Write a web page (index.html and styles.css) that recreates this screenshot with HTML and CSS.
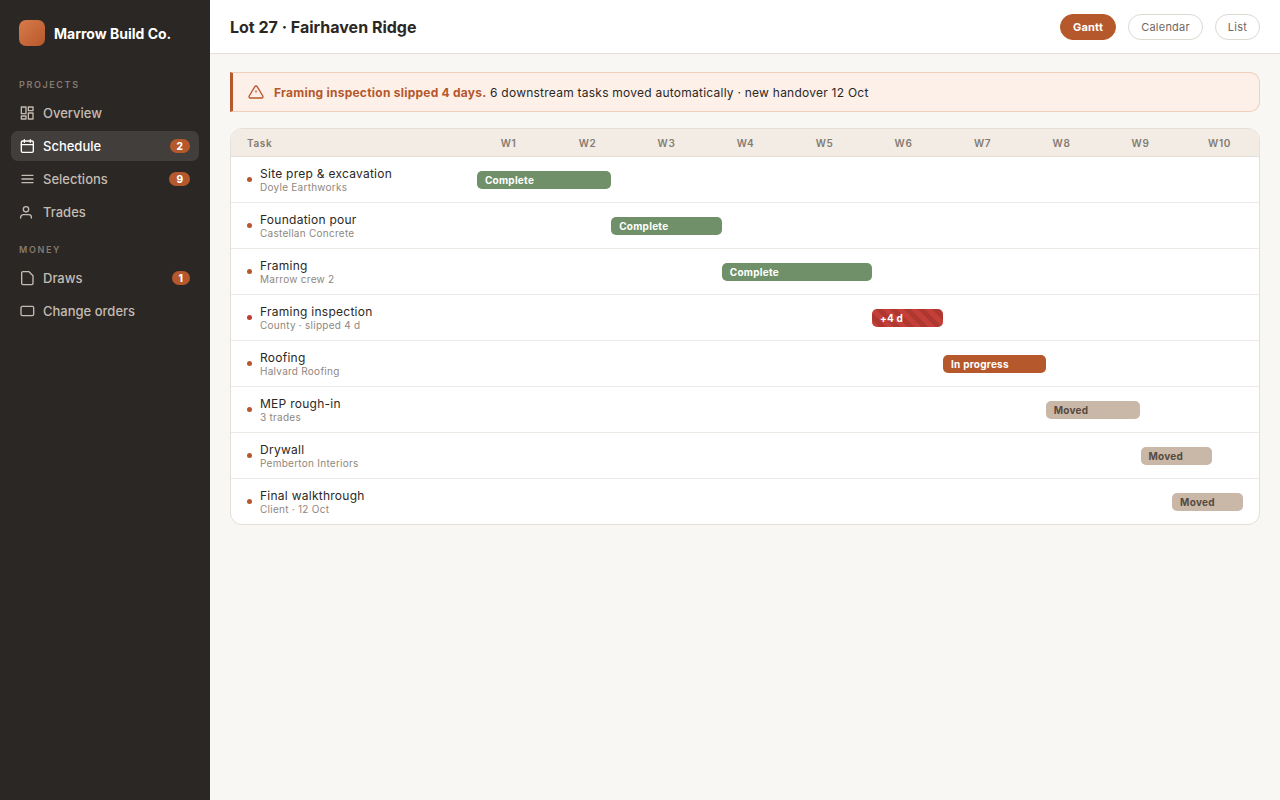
FILE: index.html
```
<!DOCTYPE html>
<html lang="en">
<head>
    <meta charset="UTF-8">
    <meta name="viewport" content="width=device-width, initial-scale=1.0">
    <title>Lot 27 · Fairhaven Ridge</title>
    <link rel="stylesheet" href="styles.css">
</head>
<body>

<aside class="sidebar">
    <div class="brand">
        <span class="brand-mark"></span>
        <span class="brand-name">Marrow Build Co.</span>
    </div>

    <nav class="nav">
        <h2 class="nav-label">Projects</h2>
        <a class="nav-item" href="#">
            <svg class="icon" viewBox="0 0 24 24"><rect x="3.5" y="3" width="7" height="10"/><rect x="14" y="3" width="7" height="5.5"/><rect x="14" y="12" width="7" height="9"/><rect x="3.5" y="16.5" width="7" height="4.5"/></svg>
            Overview
        </a>
        <a class="nav-item active" href="#">
            <svg class="icon" viewBox="0 0 24 24"><rect x="3.5" y="4.5" width="18" height="17" rx="2"/><path d="M3.5 10h18M8 2.5v4M17 2.5v4"/></svg>
            Schedule
            <span class="badge">2</span>
        </a>
        <a class="nav-item" href="#">
            <svg class="icon" viewBox="0 0 24 24"><path d="M4.5 6.5h16.5M4.5 12h16.5M4.5 17.5h16.5"/></svg>
            Selections
            <span class="badge">9</span>
        </a>
        <a class="nav-item" href="#">
            <svg class="icon" viewBox="0 0 24 24"><circle cx="10.5" cy="8" r="4"/><path d="M2.5 21v-1a4 4 0 0 1 4-4h8a4 4 0 0 1 4 4v1"/></svg>
            Trades
        </a>

        <h2 class="nav-label">Money</h2>
        <a class="nav-item" href="#">
            <svg class="icon" viewBox="0 0 24 24"><path d="M15 2.500H6a2 2 0 0 0-2 2v15.500a2 2 0 0 0 2 2h13a2 2 0 0 0 2-2V8.500z"/></svg>
            Draws
            <span class="badge">1</span>
        </a>
        <a class="nav-item" href="#">
            <svg class="icon" viewBox="0 0 24 24"><rect x="3" y="5" width="19" height="14" rx="2"/></svg>
            Change orders
        </a>
    </nav>
</aside>

<div class="main">
    <header class="topbar">
        <h1 class="title">Lot 27 · Fairhaven Ridge</h1>
        <div class="views">
            <button type="button" class="view active">Gantt</button>
            <button type="button" class="view">Calendar</button>
            <button type="button" class="view">List</button>
        </div>
    </header>

    <main class="content">
        <div class="alert">
            <svg class="icon" viewBox="0 0 24 24"><path d="M10.3 3.9 1.8 18a2 2 0 0 0 1.7 3h17a2 2 0 0 0 1.7-3L13.7 3.9a2 2 0 0 0-3.4 0z"/><path d="M12 10.5v1.5"/></svg>
            <p><strong>Framing inspection slipped 4 days.</strong> 6 downstream tasks moved automatically · new handover 12 Oct</p>
        </div>

        <div class="card">
            <table class="gantt">
                <thead>
                    <tr>
                        <th class="task-col">Task</th>
                        <th>W1</th>
                        <th>W2</th>
                        <th>W3</th>
                        <th>W4</th>
                        <th>W5</th>
                        <th>W6</th>
                        <th>W7</th>
                        <th>W8</th>
                        <th>W9</th>
                        <th>W10</th>
                    </tr>
                </thead>
                <tbody>
                    <tr>
                        <td><div class="task"><span class="dot"></span><div><div class="task-name">Site prep &amp; excavation</div><div class="task-sub">Doyle Earthworks</div></div></div></td>
                        <td colspan="10"><div class="bar done" style="margin-left: 1%; width: 17%">Complete</div></td>
                    </tr>
                    <tr>
                        <td><div class="task"><span class="dot"></span><div><div class="task-name">Foundation pour</div><div class="task-sub">Castellan Concrete</div></div></div></td>
                        <td colspan="10"><div class="bar done" style="margin-left: 18%; width: 14%">Complete</div></td>
                    </tr>
                    <tr>
                        <td><div class="task"><span class="dot"></span><div><div class="task-name">Framing</div><div class="task-sub">Marrow crew 2</div></div></div></td>
                        <td colspan="10"><div class="bar done" style="margin-left: 32%; width: 19%">Complete</div></td>
                    </tr>
                    <tr>
                        <td><div class="task"><span class="dot late"></span><div><div class="task-name">Framing inspection</div><div class="task-sub">County · slipped 4 d</div></div></div></td>
                        <td colspan="10"><div class="bar slipped" style="margin-left: 51%; width: 9%">+4 d</div></td>
                    </tr>
                    <tr>
                        <td><div class="task"><span class="dot"></span><div><div class="task-name">Roofing</div><div class="task-sub">Halvard Roofing</div></div></div></td>
                        <td colspan="10"><div class="bar progress" style="margin-left: 60%; width: 13%">In progress</div></td>
                    </tr>
                    <tr>
                        <td><div class="task"><span class="dot"></span><div><div class="task-name">MEP rough-in</div><div class="task-sub">3 trades</div></div></div></td>
                        <td colspan="10"><div class="bar moved" style="margin-left: 73%; width: 12%">Moved</div></td>
                    </tr>
                    <tr>
                        <td><div class="task"><span class="dot"></span><div><div class="task-name">Drywall</div><div class="task-sub">Pemberton Interiors</div></div></div></td>
                        <td colspan="10"><div class="bar moved" style="margin-left: 85%; width: 9%">Moved</div></td>
                    </tr>
                    <tr>
                        <td><div class="task"><span class="dot"></span><div><div class="task-name">Final walkthrough</div><div class="task-sub">Client · 12 Oct</div></div></div></td>
                        <td colspan="10"><div class="bar moved" style="margin-left: 89%; width: 9%">Moved</div></td>
                    </tr>
                </tbody>
            </table>
        </div>
    </main>
</div>

</body>
</html>
```
FILE: styles.css
```
* {
    box-sizing: border-box;
}
body {
    margin: 0;
    min-height: 100vh;
    display: flex;
    font-family: Inter, sans-serif;
    font-size: 13px;
    color: #2b2724;
    background: #f9f7f3;
}
h1, h2, p {
    margin: 0;
}
.icon {
    width: 16px;
    height: 16px;
    flex: none;
    fill: none;
    stroke: currentColor;
    stroke-width: 2;
    stroke-linecap: round;
    stroke-linejoin: round;
}

/* sidebar */
.sidebar {
    width: 210px;
    flex: none;
    padding: 20px 11px;
    background: #2b2724;
    color: #c4bcb3;
}
.brand {
    display: flex;
    align-items: center;
    gap: 9px;
    padding: 0 8px;
}
.brand-mark {
    width: 26px;
    height: 26px;
    border-radius: 7px;
    background: linear-gradient(135deg, #d97a4a, #b5582b);
}
.brand-name {
    font-size: 14px;
    font-weight: 700;
    color: #fff;
}
.nav {
    display: flex;
    flex-direction: column;
    gap: 3px;
    margin-top: 32px;
}
.nav-label {
    padding: 0 8px;
    margin-bottom: 3px;
    font-size: 9px;
    line-height: 14px;
    font-weight: 600;
    letter-spacing: 0.18em;
    text-transform: uppercase;
    color: #857b70;
}
.nav-item + .nav-label {
    margin-top: 13px;
}
.nav-item {
    display: flex;
    align-items: center;
    gap: 8px;
    height: 30px;
    padding: 0 9px 0 8px;
    border-radius: 7px;
    font-weight: 500;
    color: inherit;
    text-decoration: none;
}
.nav-item.active {
    background: #423e3b;
    color: #fff;
}
.badge {
    margin-left: auto;
    padding: 0 7px;
    border-radius: 7px;
    font-size: 10px;
    line-height: 14px;
    font-weight: 800;
    color: #fff;
    background: #b5582b;
}

/* top bar */
.main {
    flex: 1;
    min-width: 0;
}
.topbar {
    display: flex;
    align-items: center;
    justify-content: space-between;
    height: 54px;
    padding: 0 20px;
    background: #fff;
    border-bottom: 1px solid #e5dfd8;
}
.title {
    font-size: 16px;
    font-weight: 700;
}
.views {
    display: flex;
    gap: 12px;
}
.view {
    height: 26px;
    padding: 0 12px;
    border: 1px solid #ddd8d1;
    border-radius: 13px;
    font-family: inherit;
    font-size: 11px;
    letter-spacing: 0.02em;
    color: #6f675f;
    background: #fff;
    cursor: pointer;
}
.view.active {
    border-color: #b5582b;
    font-weight: 700;
    color: #fff;
    background: #b5582b;
}

/* content */
.content {
    display: grid;
    gap: 16px;
    padding: 18px 20px;
}
.alert {
    display: flex;
    align-items: center;
    gap: 10px;
    min-height: 40px;
    padding: 0 15px;
    border: 1px solid #f0cfbb;
    border-left: 3px solid #b5582b;
    border-radius: 0 10px 10px 0;
    font-size: 12px;
    letter-spacing: 0.02em;
    background: #fdf0e9;
}
.alert .icon {
    color: #b5582b;
}
.alert strong {
    font-weight: 700;
    color: #b5582b;
}
.card {
    overflow: hidden;
    border: 1px solid #e5dfd8;
    border-radius: 12px;
    background: #fff;
}
.gantt {
    width: 100%;
    table-layout: fixed;
    border-spacing: 0;
    letter-spacing: 0.02em;
}
.gantt th {
    height: 28px;
    padding: 0;
    font-size: 10px;
    font-weight: 600;
    letter-spacing: 0.06em;
    color: #857b70;
    background: #f2ece5;
    border-bottom: 1px solid #e5dfd8;
}
.gantt .task-col {
    width: 238px;
    padding-left: 16px;
    text-align: left;
}
.gantt td {
    height: 46px;
    padding: 0;
    border-bottom: 1px solid #eeeae5;
}
.gantt tr:last-child td {
    height: 45px;
    border-bottom: 0;
}
.task {
    display: flex;
    align-items: center;
    gap: 8px;
    padding-left: 16px;
}
.dot {
    width: 5px;
    height: 5px;
    border-radius: 50%;
    background: #b5582b;
}
.dot.late {
    background: #bf3b33;
}
.task-name {
    font-size: 12px;
    line-height: 15px;
}
.task-sub {
    font-size: 10px;
    line-height: 13px;
    color: #8f877e;
}
.bar {
    height: 18px;
    padding: 0 8px;
    border-radius: 5px;
    font-size: 10px;
    line-height: 18px;
    font-weight: 700;
    color: #fff;
    white-space: nowrap;
}
.bar.done {
    background: #6f9068;
}
.bar.slipped {
    background: repeating-linear-gradient(45deg, #c43f37 0 5px, #ae372f 5px 10px);
}
.bar.progress {
    background: #b5582b;
}
.bar.moved {
    color: #564a40;
    background: #c9b7a8;
}
```
